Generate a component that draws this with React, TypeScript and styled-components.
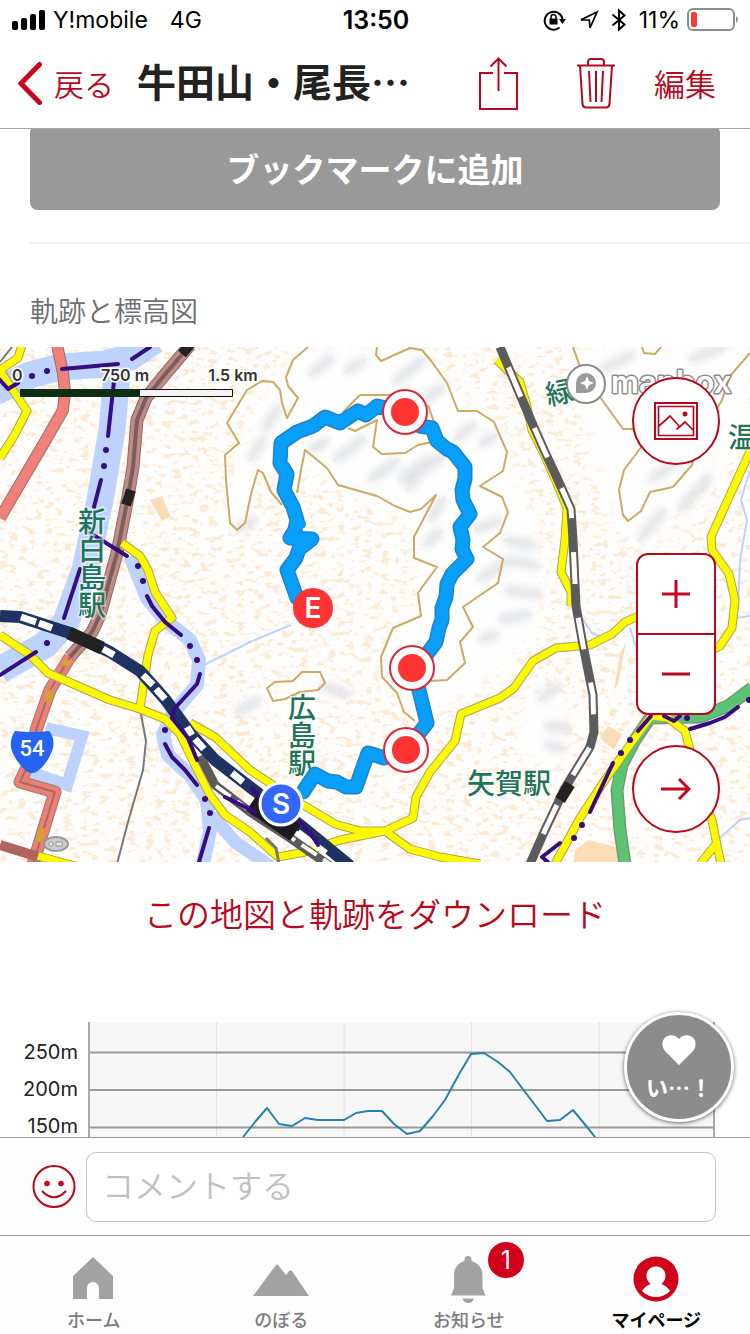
import React from "react";
import styled, { createGlobalStyle } from "styled-components";

const RED = "#b8081e";
const JP = `"Noto Sans CJK JP", sans-serif`;
const LATIN = `Inter, "Noto Sans CJK JP", sans-serif`;

const GlobalStyle = createGlobalStyle`
  * { box-sizing: border-box; }
  body { margin: 0; background: #fff; font-family: ${JP}; color: #222; }
  button, input { font-family: inherit; }
  button { border: 0; padding: 0; background: none; cursor: pointer; }
  a { text-decoration: none; }
  svg { display: block; }
`;

const Screen = styled.div`
  height: 100vh;
  display: flex;
  flex-direction: column;
  overflow: hidden;
`;

/* ---------- status bar ---------- */

const StatusBar = styled.div`
  display: grid;
  grid-template-columns: 1fr auto 1fr;
  align-items: center;
  height: 40px;
  flex: none;
  padding: 0 10px 0 12px;
  font-family: ${LATIN};
  font-size: 23px;
  line-height: 28px;
  color: #000;
`;

const StatusGroup = styled.div<{ $end?: boolean }>`
  display: flex;
  align-items: center;
  gap: ${(p) => (p.$end ? 12 : 7)}px;
  justify-content: ${(p) => (p.$end ? "flex-end" : "flex-start")};
`;

const Network = styled.span`
  margin-left: 15px;
`;

const Clock = styled.strong`
  font-weight: 600;
  font-size: 25px;
`;

const Battery = styled.span`
  display: flex;
  align-items: center;
  gap: 7px;
`;

/* ---------- navigation header ---------- */

const Header = styled.header`
  display: flex;
  align-items: center;
  flex: none;
  height: 89px;
  padding: 0 34px 2px 18px;
  border-bottom: 1px solid #a6a6a6;
`;

const BackButton = styled.button`
  display: flex;
  align-items: center;
  gap: 11px;
  font-size: 30px;
  line-height: 44px;
  font-weight: 350;
  color: ${RED};
`;

const Title = styled.h1`
  flex: 1;
  min-width: 0;
  margin: 0 0 6px 23px;
  font-size: 39px;
  line-height: 56px;
  font-weight: 700;
  white-space: nowrap;
`;

const Actions = styled.div`
  display: flex;
  align-items: center;
  gap: 59px;
`;

const EditButton = styled.button`
  margin-left: -20px;
  font-size: 31px;
  line-height: 44px;
  font-weight: 350;
  color: ${RED};
`;

/* ---------- scrolling content ---------- */

const Content = styled.main`
  position: relative;
  flex: 1;
  min-height: 0;
  overflow: hidden;
`;

const BookmarkButton = styled.button`
  display: block;
  width: calc(100% - 60px);
  height: 85px;
  margin: -4px 30px 0;
  border-radius: 8px;
  background: #999;
  color: #fff;
  font-size: 33px;
  line-height: 48px;
  font-weight: 700;
`;

const Divider = styled.hr`
  margin: 32px 0 0 30px;
  border: 0;
  border-top: 2px solid #f2f2f2;
`;

const SectionTitle = styled.h2`
  margin: 46px 30px 17px;
  font-size: 28px;
  line-height: 40px;
  font-weight: 350;
  color: #6e6e73;
`;

const MapPanel = styled.section`
  position: relative;
  height: 515px;
  overflow: hidden;
`;

const MapDrawing = styled.svg`
  width: 100%;
  height: 100%;
`;

const MapControls = styled.div`
  position: absolute;
  top: 30px;
  right: 30px;
  display: flex;
  flex-direction: column;
  align-items: center;
`;

const RoundButton = styled.button`
  display: grid;
  place-items: center;
  width: 88px;
  height: 88px;
  border: 2px solid ${RED};
  border-radius: 50%;
  background: #fff;
`;

const ZoomGroup = styled.div`
  display: flex;
  flex-direction: column;
  width: 80px;
  margin: 88px 0 30px;
  border: 2px solid ${RED};
  border-radius: 12px;
  background: #fff;
`;

const ZoomButton = styled.button`
  display: grid;
  place-items: center;
  height: 78px;
  & + & {
    height: 80px;
    border-top: 2px solid ${RED};
  }
`;

const DownloadLink = styled.a`
  display: block;
  margin: 26px 0 84px;
  text-align: center;
  font-size: 33px;
  line-height: 50px;
  font-weight: 350;
  color: ${RED};
`;

const Chart = styled.section`
  display: flex;
  padding-right: 35px;
`;

const ChartLabels = styled.div`
  flex: none;
  width: 78px;
  margin-right: 10px;
  padding-top: 12px;
  text-align: right;
  font-family: ${LATIN};
  font-size: 20px;
  line-height: 37px;
  color: #222;
`;

const ChartPlot = styled.svg`
  flex: 1;
  min-width: 0;
  height: 150px;
`;

const LikeButton = styled.button`
  position: absolute;
  right: 16px;
  bottom: 15px;
  display: flex;
  flex-direction: column;
  align-items: center;
  gap: 5px;
  width: 110px;
  height: 110px;
  padding-top: 20px;
  border: 3px solid #fff;
  border-radius: 50%;
  background: #8c8c8c;
  box-shadow: 0 1px 4px rgba(0, 0, 0, 0.6);
  color: #fff;
  font-size: 22px;
  line-height: 32px;
  font-weight: 700;
`;

/* ---------- comment bar and tabs ---------- */

const CommentBar = styled.form`
  display: flex;
  align-items: center;
  flex: none;
  gap: 10px;
  height: 98px;
  padding: 0 34px 0 32px;
  border-top: 1px solid #9a9a9a;
  background: #fdfdfd;
`;

const CommentInput = styled.input`
  flex: 1;
  min-width: 0;
  height: 70px;
  padding: 0 15px 6px;
  border: 1px solid #c4c4c4;
  border-radius: 10px;
  background: #fff;
  font-size: 32px;
  font-weight: 350;
  color: #222;
  outline: none;
  &::placeholder {
    color: #c0c0c0;
    opacity: 1;
  }
`;

const TabBar = styled.nav`
  display: grid;
  grid-template-columns: repeat(4, 1fr);
  flex: none;
  height: 99px;
  border-top: 1px solid #9a9a9a;
  background: #fdfdfd;
`;

const Tab = styled.a<{ $active?: boolean }>`
  display: flex;
  flex-direction: column;
  align-items: center;
  padding-top: 18px;
  font-size: 18px;
  line-height: 28px;
  font-weight: ${(p) => (p.$active ? 700 : 500)};
  color: ${(p) => (p.$active ? "#000" : "#7c7c7c")};
`;

const TabIcon = styled.span`
  position: relative;
  margin-bottom: 1px;
`;

const Badge = styled.span`
  position: absolute;
  top: -12px;
  left: 47px;
  width: 36px;
  height: 36px;
  border-radius: 50%;
  background: #d0021b;
  color: #fff;
  font-family: ${LATIN};
  font-size: 25px;
  line-height: 36px;
  font-weight: 400;
  text-align: center;
`;

/* ---------- map data ---------- */

const yellowRoads = [
  "M22 345 L18 358 L0 370 L10 386 L27 411 L14 436 L0 458",
  "M0 635 L30 655 L48 673 L110 700 L140 709 L165 719 L180 734 L195 765 L210 795 L225 815 L250 832 L278 857 L305 852 L340 840 L385 831",
  "M190 723 L215 737 L250 770 L300 803 L335 824 L360 831 L385 831 L410 849 L440 857 L480 864",
  "M385 831 L413 818 L416 797 L430 772 L455 741 L461 714 L500 698 L514 688 L533 661 L556 648 L590 645 L612 634 L625 622 L645 613",
  "M122 543 L140 556 L148 570 L155 592 L172 618 L155 631 L148 655 L140 708",
  "M497 360 L520 382 L527 407 L532 430 L543 452 L556 481 L567 508 L565 540 L561 572 L571 592 L571 606",
  "M752 447 L730 495 L711 537 L712 550 L729 574 L735 600 L732 628 L720 646 L708 652",
  "M555 864 L580 818 L605 780 L632 742 L651 716 L668 718 L685 731 L690 750 L704 800 L712 820 L718 850 L721 864",
  "M716 844 L700 864",
  "M38 856 L75 866",
];

const contours = [
  "M308 347 L293 360 L286 377 L288 386 L298 398 L287 418 L282 403 L280 390 L273 382 L262 381 L247 390 L227 423 L239 443 L225 455 L226 480 L230 523 L237 530 L245 523 L251 494 L258 470 L263 473 L271 492 L282 505",
  "M297 493 L301 470 L305 450 L327 468 L338 485 L377 496 L395 506 L410 512 L421 509 L436 495 L414 537 L414 558 L437 567 L418 593 L421 616 L393 628 L381 657 L382 677 L397 693 L404 712 L415 721",
  "M377 347 L376 355 L381 361 L410 348 L422 350 L432 362 L447 383 L458 411 L477 411 L494 422 L507 452 L503 471 L480 486 L502 497 L508 512 L500 533 L483 547 L503 559 L498 583 L463 607 L473 627 L460 642 L465 663 L447 680 L430 681",
  "M395 395 L360 395 L343 412",
  "M348 428 L355 431 L377 420 L373 447 L382 454 L405 453 L418 445 L432 442",
  "M428 405 L435 425",
  "M267 688 L275 682 L293 681 L302 672 L320 672 L325 683 L318 690 L300 692 L285 699 L273 701 Z",
  "M573 347 L580 367 L600 397 L623 429 L638 429",
  "M642 347 L644 353 L655 354 L661 347",
  "M642 446 L624 470 L619 490 L623 515 L628 521 L641 511 L650 492 L673 487 L692 465 L696 445 L722 400 L730 376 L750 353",
];

const boundaries = [
  "M62 369 L118 364", "M132 359 L150 347", "M0 380 L8 389 L18 383", "M114 381 L108 436",
  "M101 480 L94 507", "M90 533 L127 556", "M80 569 L64 618", "M36 652 L0 675",
  "M147 596 L152 606 L165 622 L181 635",
  "M200 674 L197 684 L174 709 L172 718 L188 738 L197 760",
  "M165 744 L172 757 L185 770 L197 785", "M209 828 L199 862",
  "M225 797 L255 812", "M252 788 L262 800", "M298 820 L312 836 L318 845",
  "M651 716 L638 731", "M613 763 L590 812", "M560 843 L542 857 L550 864",
  "M664 716 L674 721 L680 716", "M690 729 L710 723 L725 717 L738 707",
];

const boundaryDots = [
  [32, 376], [47, 371], [106, 450], [104, 466], [138, 566], [143, 581], [190, 646], [197, 660],
  [47, 643], [165, 730], [205, 799], [210, 813], [630, 740], [621, 753], [582, 825], [574, 838],
  [687, 718], [749, 700],
];

const track =
  "M303 792 L315 774 L328 781 L337 782 L346 787 L356 787 L368 753 L384 758 L406 750 L427 723 L418 686 L412 668 L427 654 L436 642 L439 628 L442 620 L442 608 L446 597 L447 584 L452 574 L467 559 L462 549 L463 540 L460 527 L470 514 L463 500 L462 490 L465 479 L465 467 L453 452 L447 449 L437 441 L432 428 L420 426 L405 412 L377 406 L366 415 L358 411 L340 423 L325 417 L313 426 L297 432 L281 443 L280 463 L287 474 L284 490 L293 507 L297 520 L295 530 L290 538 L312 539 L299 549 L296 558 L287 570 L297 598";

const hillStrokes =
  "M310 375l22 -18 M345 372l20 -12 M395 382l30 -24 M425 400l18 -14 M310 450l18 -10 M335 460l30 -22 M370 480l28 -20 M400 480l30 -22 M425 470l22 -18 M455 440l20 -16 M480 445l16 -10 M475 530l26 -10 M478 580l26 -16 M480 640l18 -6 M500 620l30 -6 M505 590l36 4 M505 560l34 6 M505 540l30 6 M265 430l14 -24 M250 460l14 -22 M238 530l18 -12 M320 685l30 10 M640 540l24 -30 M680 510l30 -34 M650 480l30 -20 M600 370l34 -16 M690 360l34 -14 M540 700l20 -16 M545 725l26 4 M545 745l20 4 M420 470l-12 20 M430 520l14 -22 M425 545l16 -14 M260 700l-24 12";

const Waypoint = ({ x, y }: { x: number; y: number }) => (
  <g>
    <circle cx={x} cy={y} r="22" fill="#fff" stroke="#d9273a" strokeWidth="2" />
    <circle cx={x} cy={y} r="14" fill="#ff3333" />
  </g>
);

const VerticalLabel = styled.text`
  writing-mode: vertical-rl;
  font-size: 28px;
`;

const rail = "M0 616 L20 617 L70 633 L110 652 L140 671 L165 699 L190 733 L215 760 L250 787 L300 825 L350 866";
const grayRail = "M500 347 L521 397 L533 425 L545 452 L558 480 L571 509 L573 540 L576 606 L583 645 L593 695 L594 732 L590 747 L565 788 L545 830 L530 864";
const brownRail = "M190 345 L162 378 L146 398 L137 420 L133 467 L128 497 L117 553 L100 615 L92 632 L70 657";
const redRoad = "M70 657 L50 690 L37 727 L28 765 L20 782 L55 792 L33 864";

const AreaMap = () => (
  <MapDrawing viewBox="0 347 750 515" preserveAspectRatio="xMidYMid slice" role="img" aria-label="軌跡の地図">
    <defs>
      <filter id="blocks" x="0" y="0" width="100%" height="100%">
        <feTurbulence type="fractalNoise" baseFrequency="0.11 0.19" numOctaves="4" seed="4" />
        <feColorMatrix values="0 0 0 0 0.97  0 0 0 0 0.82  0 0 0 0 0.66  8 0 0 0 -4.4" />
      </filter>
      <filter id="relief" x="-10%" y="-10%" width="120%" height="120%">
        <feGaussianBlur stdDeviation="4" />
      </filter>
      <filter id="soft" x="-10%" y="-10%" width="120%" height="120%">
        <feGaussianBlur stdDeviation="8" />
      </filter>
    </defs>
    <rect y="347" width="750" height="515" fill="#fffefd" />
    <rect y="347" width="750" height="515" filter="url(#blocks)" />
    <g fill="#fefefe" filter="url(#soft)">
      <path d="M255 400 L300 345 L420 345 L460 395 L505 430 L545 560 L540 630 L480 690 L430 710 L385 690 L385 640 L425 600 L405 520 L320 475 L260 470 L240 540 L225 510 Z" />
      <path d="M570 345 H750 V440 L700 480 L650 560 L610 520 Z M240 700 L330 670 L350 690 L270 720 Z M520 690 L570 700 L560 770 L520 760 Z" />
    </g>
    <path d={hillStrokes} stroke="#dfe0e4" strokeWidth="9" fill="none" filter="url(#relief)" />
    <path d={hillStrokes} stroke="#e9eaed" strokeWidth="3" fill="none" strokeLinecap="round" opacity="0.7" />
    <path d="M150 500 l12 -4 l8 20 l-8 5z M614 690 l6 -36 l6 -12 l-8 42z M600 738 l8 -12 l14 8 l-8 16z M575 850 l14 -10 l30 8 v16 h-46z" fill="#fbdcb5" />

    <g fill="none" stroke="#bdd2fd" strokeLinejoin="round">
      <path d="M-5 392 L30 375 L60 367 L105 364 L130 357 L155 340" strokeWidth="27" />
      <path d="M118 362 L112 430 L100 500 L85 570 L66 622 L45 645 L0 670" strokeWidth="27" />
      <path d="M130 556 L147 598 L165 620 L190 640 L199 660 L197 685 L173 713 L163 735 L168 755 L190 775 L207 800 L210 830 L203 864" strokeWidth="14" />
      <path d="M212 815 L235 842 L270 866" strokeWidth="13" />
      <path d="M46 728 L82 736 L67 785 L30 772" strokeWidth="12" strokeLinejoin="miter" />
      <path d="M206 664 L250 642 L291 625 M750 470 L741 500 L747 520 L740 560 L738 610 M582 618 L592 633 L608 640 M630 628 L637 650 M720 838 L740 820 L750 818 M735 618 L750 616" strokeWidth="2" />
    </g>

    <g fill="none" stroke="#cbaa64" strokeWidth="2" strokeLinejoin="round">
      {contours.map((d) => <path key={d} d={d} />)}
    </g>

    <g fill="none" strokeLinejoin="round">
      <path d="M140 709 L146 741 L143 770 L128 822 L117 864 M12 347 L0 362" stroke="#777" strokeWidth="2" />
      <path d="M57 345 L63 373 L65 392 L63 410 L47 438 L0 518" stroke="#8c7470" strokeWidth="12" />
      <path d="M57 345 L63 373 L65 392 L63 410 L47 438 L0 518" stroke="#f08079" strokeWidth="10" />
      <path d="M650 718 L635 740 L622 765 L617 790 L620 830 L625 864 M752 688 L728 706 L700 717 L650 718" stroke="#6f9a78" strokeWidth="13" />
      <path d="M650 718 L635 740 L622 765 L617 790 L620 830 L625 864 M752 688 L728 706 L700 717 L650 718" stroke="#5bc473" strokeWidth="10" />
      <path d={redRoad} stroke="#9a7b72" strokeWidth="13" />
      <path d={redRoad} stroke="#ee7f76" strokeWidth="11" />
      <path d={redRoad} stroke="#a86a64" strokeWidth="2" />
      <path d={brownRail} stroke="#8b6b68" strokeWidth="13" />
      <path d={brownRail} stroke="#c58a86" strokeWidth="11" />
      <path d={brownRail} stroke="#77605d" strokeWidth="4" />
      <path d="M0 845 L42 858" stroke="#b0645f" strokeWidth="10" />
      <path d="M193 341 L182 354 M131 490 L126 505" stroke="#222" strokeWidth="10" />
      {yellowRoads.map((d) => <path key={d} d={d} stroke="#a9a55c" strokeWidth="9" />)}
      {yellowRoads.map((d) => <path key={d} d={d} stroke="#fbf800" strokeWidth="7" />)}
      <path d="M68 660 L65 666 M50 690 L48 702 M42 828 L39 842" stroke="#d3a233" strokeWidth="7" />
      <path d={grayRail} stroke="#5c5c5e" strokeWidth="9" />
      <path d={grayRail} stroke="#fff" strokeWidth="5" strokeDasharray="32 34" strokeDashoffset="-22" />
      <path d="M570 784 L560 800" stroke="#222" strokeWidth="11" />
      <path d="M200 756 L215 785 L250 812 L290 838 L330 866" stroke="#5b5b5b" strokeWidth="9" />
      <path d="M216 786 L250 811 L290 837 L330 864" stroke="#fff" strokeWidth="4" strokeDasharray="18 8" />
      <path d={rail} stroke="#1f3261" strokeWidth="12" />
      <path d="M21 617 L36 622 M39 623 L52 628 M103 649 L114 655 M143 675 L153 685 M156 689 L165 699 M187 727 L192 735 M195 739 L204 749 M232 773 L243 782" stroke="#fff" strokeWidth="7" />
      <path d="M69 633 L102 648" stroke="#222" strokeWidth="13" />
      <path d="M252 802 L296 832" stroke="#1b1b1f" strokeWidth="21" />
      <path d="M298 832 L326 853" stroke="#fff" strokeWidth="6" />
      <path d="M266 838 L276 848 L279 864" stroke="#777" strokeWidth="3" />
      {boundaries.map((d) => <path key={d} d={d} stroke="#360c80" strokeWidth="4" strokeLinecap="round" />)}
    </g>
    {boundaryDots.map(([x, y]) => <circle key={`${x}-${y}`} cx={x} cy={y} r="3" fill="#360c80" />)}

    <path d="M15 731 Q32 733 49 731 Q55 738 53 748 Q49 761 40 769 Q32 777 24 769 Q14 759 11 748 Q10 738 15 731Z" fill="#2563f2" />
    <text x="32" y="756" textAnchor="middle" fontFamily="Roboto, sans-serif" fontSize="22" fontWeight="500" fill="#fff">54</text>
    <ellipse cx="56" cy="844" rx="12" ry="7" fill="#ccc" stroke="#999" strokeWidth="2" />
    <path d="M49 842h4v4h-4z M56 842h6v4h-6z" fill="#e8e8e8" stroke="#999" />

    <g fontFamily={JP} fontSize="28" fontWeight="500" fill="#1f7459" stroke="#fff" strokeWidth="3" paintOrder="stroke" strokeOpacity="0.6">
      <VerticalLabel x="92" y="507">新白島駅</VerticalLabel>
      <VerticalLabel x="302" y="693">広島駅</VerticalLabel>
      <text x="467" y="794">矢賀駅</text>
      <text x="545" y="403" transform="rotate(-12 558 390)">緑</text>
      <text x="728" y="448">温</text>
    </g>

    <path d={track} fill="none" stroke="#1c83c6" strokeWidth="15" strokeLinejoin="round" strokeLinecap="round" />
    <path d={track} fill="none" stroke="#079ffa" strokeWidth="12" strokeLinejoin="round" strokeLinecap="round" />
    <circle cx="301" cy="524" r="5" fill="#079ffa" />
    <Waypoint x={405} y={412} />
    <Waypoint x={412} y={668} />
    <Waypoint x={406} y={750} />
    <g fontFamily={LATIN} fontWeight="600" fill="#fff" textAnchor="middle">
      <circle cx="313" cy="608" r="20" fill="#ff3333" />
      <text x="313" y="618" fontSize="28">E</text>
      <circle cx="281" cy="804" r="21" fill="#3466fb" stroke="#fff" strokeWidth="3" />
      <text x="281" y="814" fontSize="28">S</text>
    </g>

    <g fontFamily={LATIN} fontSize="16" fontWeight="600" fill="#333" stroke="#fff" strokeWidth="3" paintOrder="stroke">
      <text x="12" y="381">0</text>
      <text x="125" y="381" textAnchor="middle">750 m</text>
      <text x="233" y="381" textAnchor="middle">1.5 km</text>
    </g>
    <path d="M20.5 389.500h212v7h-212z" fill="#f4f4f4" stroke="#111" />
    <path d="M20 389h120v8h-120z" fill="#0c2e12" />

    <circle cx="586" cy="384" r="19" fill="#fff" stroke="#8a8a8a" strokeWidth="2" />
    <path d="M576 393 V383 A10 10 0 1 1 586 393 Z" fill="#9a9a9a" />
    <path d="M587 376 L589 381 L594 383 L589 385 L587 390 L585 385 L580 383 L585 381 Z" fill="#fff" />
    <text x="611" y="393" fontFamily={LATIN} fontSize="31" fontWeight="600" fill="#fff" stroke="#8d8d8d" strokeWidth="3" strokeLinejoin="round" paintOrder="stroke">mapbox</text>
  </MapDrawing>
);

const elevation =
  "155,115 167,100 179,86 191,102 204,104 217,96 230,98 245,98 256,98 268,91 280,89 294,89 306,102 319,112 332,109 345,94 357,78 370,54 383,32 396,31 410,40 422,50 434,66 447,83 459,99 472,98 485,88 499,105 507,115 530,145";

export default function App() {
  return (
    <Screen>
      <GlobalStyle />
      <StatusBar>
        <StatusGroup>
          <svg width="34" height="20" viewBox="0 0 34 20">
            <rect x="0" y="11" width="6" height="9" rx="2" />
            <rect x="9" y="8" width="6" height="12" rx="2" />
            <rect x="18" y="4" width="6" height="16" rx="2" />
            <rect x="27" y="0" width="6" height="20" rx="2" />
          </svg>
          <span>Y!mobile</span>
          <Network>4G</Network>
        </StatusGroup>
        <Clock>13:50</Clock>
        <StatusGroup $end>
          <svg width="24" height="22" viewBox="0 0 24 22" fill="none" stroke="#000" strokeWidth="2">
            <path d="M16.500 18.600 A9 9 0 1 1 19.500 10" />
            <path d="M16 10 h7 l-3.500 5z" fill="#000" stroke="none" />
            <path d="M6.500 9.500h8v6h-8z" fill="#000" stroke="none" />
            <path d="M8 10V8a2.500 2.500 0 0 1 5 0v2" strokeWidth="1.500" />
          </svg>
          <svg width="20" height="20" viewBox="0 0 20 20" fill="none" stroke="#000" strokeWidth="1.700" strokeLinejoin="miter">
            <path d="M2 9.800 L18 2 L11 18 L10.300 10 Z" />
          </svg>
          <svg width="16" height="24" viewBox="0 0 16 24" fill="none" stroke="#000" strokeWidth="2">
            <path d="M1.500 6.500 L13.500 16.500 L8 21.500 V2.500 L13.500 7.500 L1.500 17.500" />
          </svg>
          <Battery>
            11%
            <svg width="53" height="24" viewBox="0 0 53 24">
              <rect x="1" y="1" width="46" height="21" rx="5" fill="#fff" stroke="#8c8c8c" strokeWidth="2" />
              <rect x="4" y="4" width="6" height="15" rx="2" fill="#fb3c32" />
              <path d="M49 8 q4 3.500 0 7z" fill="#8c8c8c" />
            </svg>
          </Battery>
        </StatusGroup>
      </StatusBar>

      <Header>
        <BackButton type="button">
          <svg width="25" height="44" viewBox="0 0 25 44" fill="none" stroke="#c8061f" strokeWidth="5" strokeLinecap="round">
            <path d="M21.500 3.500 L3 22.500 L21.500 41.500" />
          </svg>
          戻る
        </BackButton>
        <Title>牛田山・尾長…</Title>
        <Actions>
          <button type="button" aria-label="共有">
            <svg width="40" height="54" viewBox="0 0 40 54" fill="none" stroke={RED} strokeWidth="2">
              <path d="M15 17 H2 V53 H39 V17 H26 M20.500 35 V3 M12.500 10.500 L20.500 2.500 L28.500 10.500" />
            </svg>
          </button>
          <button type="button" aria-label="削除">
            <svg width="38" height="52" viewBox="0 0 38 52" fill="none" stroke={RED} strokeWidth="2">
              <path d="M0 8.500 H38 M11 8 V5 Q11 2 14 2 H24 Q27 2 27 5 V8 M3 9 L5.500 47 Q6 50.500 9 50.500 H29 Q32 50.500 32.500 47 L35 9 M12 14 L13.500 45 M19 14 V45 M26 14 L24.500 45" />
            </svg>
          </button>
          <EditButton type="button">編集</EditButton>
        </Actions>
      </Header>

      <Content>
        <BookmarkButton type="button">ブックマークに追加</BookmarkButton>
        <Divider />
        <SectionTitle>軌跡と標高図</SectionTitle>
        <MapPanel>
          <AreaMap />
          <MapControls>
            <RoundButton type="button" aria-label="写真">
              <svg width="44" height="38" viewBox="0 0 44 38" fill="none" stroke={RED} strokeWidth="2">
                <path d="M1 1h42v36H1z" />
                <path d="M4.500 4.500h35v29h-35z M5 24 L16 14 L25 24 M22.500 27.500 L31 20 L39 28" strokeWidth="1.700" />
                <circle cx="31" cy="12" r="2.500" fill={RED} stroke="none" />
              </svg>
            </RoundButton>
            <ZoomGroup>
              <ZoomButton type="button" aria-label="拡大">
                <svg width="28" height="28" viewBox="0 0 28 28" stroke="#c8061f" strokeWidth="3">
                  <path d="M0 14H28M14 0V28" />
                </svg>
              </ZoomButton>
              <ZoomButton type="button" aria-label="縮小">
                <svg width="28" height="28" viewBox="0 0 28 28" stroke="#b8081e" strokeWidth="3">
                  <path d="M0 14H28" />
                </svg>
              </ZoomButton>
            </ZoomGroup>
            <RoundButton type="button" aria-label="次へ">
              <svg width="30" height="22" viewBox="0 0 30 22" fill="none" stroke="#c8061f" strokeWidth="3">
                <path d="M0 11H28M18 1L28 11L18 21" />
              </svg>
            </RoundButton>
          </MapControls>
        </MapPanel>
        <DownloadLink href="#download">この地図と軌跡をダウンロード</DownloadLink>
        <Chart>
          <ChartLabels>
            <div>250m</div>
            <div>200m</div>
            <div>150m</div>
          </ChartLabels>
          <ChartPlot viewBox="0 0 627 150" preserveAspectRatio="none" role="img" aria-label="標高図">
            <rect width="627" height="150" fill="#f7f7f7" />
            <path d="M128.500 0V150M256 0V150M383.500 0V150M511 0V150" stroke="#e2e2e2" strokeWidth="1" />
            <path d="M0 30.500H627M0 68H627M0 105.500H627" stroke="#999" strokeWidth="2" />
            <path d="M1 0V150M626 0V150" stroke="#aaa" strokeWidth="2" />
            <polyline points={elevation} fill="none" stroke="#2880ad" strokeWidth="2" strokeLinejoin="round" />
          </ChartPlot>
        </Chart>
        <LikeButton type="button">
          <svg width="34" height="30" viewBox="0 0 34 30" fill="#fff">
            <path d="M17 30 L3 16 C-1 11 0 5 3.500 2.200 C8 -1.200 14 0 17 4 C20 0 26 -1.200 30.500 2.200 C34 5 35 11 31 16 Z" />
          </svg>
          い…！
        </LikeButton>
      </Content>

      <CommentBar onSubmit={(e) => e.preventDefault()}>
        <button type="button" aria-label="スタンプ">
          <svg width="44" height="44" viewBox="0 0 44 44" fill="none" stroke={RED} strokeWidth="2">
            <circle cx="22" cy="21.500" r="20.500" />
            <circle cx="15" cy="18.500" r="2.800" fill="#c8061f" stroke="none" />
            <circle cx="29" cy="18.500" r="2.800" fill="#c8061f" stroke="none" />
            <path d="M10 26 Q22 38.500 34 26" />
          </svg>
        </button>
        <CommentInput type="text" aria-label="コメント" placeholder="コメントする" />
      </CommentBar>

      <TabBar>
        <Tab href="#home">
          <TabIcon>
            <svg width="56" height="50" viewBox="0 0 56 50" fill="#a2a2a2">
              <path d="M27 3 L47 22 V45 H33 V34 A6 6 0 0 0 21 34 V45 H7 V22 Z" />
            </svg>
          </TabIcon>
          ホーム
        </Tab>
        <Tab href="#climb">
          <TabIcon>
            <svg width="56" height="50" viewBox="0 0 56 50" fill="#a2a2a2">
              <path d="M0 42 L23 11 Q24 9.500 25 11 L33 21 L36 17 Q37.500 15.500 39 17 L56 42 Z" />
            </svg>
          </TabIcon>
          のぼる
        </Tab>
        <Tab href="#news">
          <TabIcon>
            <svg width="56" height="50" viewBox="0 0 56 50" fill="#a2a2a2">
              <path d="M23.500 7 V5.500 A3.500 3.500 0 0 1 30.500 5.500 V7 C37 9 41.500 14 41.500 21 V34 L44.500 41.500 H10 L13 34 V21 C13 14 17 9 23.500 7 Z" />
              <path d="M21.500 44.500 H33 Q31.500 49 27.200 49 Q23 49 21.500 44.500 Z" />
            </svg>
            <Badge>1</Badge>
          </TabIcon>
          お知らせ
        </Tab>
        <Tab href="#mypage" $active>
          <TabIcon>
            <svg width="56" height="50" viewBox="0 0 56 50">
              <circle cx="28" cy="25" r="22.500" fill="#d0021b" />
              <path d="M28 12.500 C34 12.500 37.500 17 37.500 21.500 C37.500 25 36 28 33.500 30 C37 31.500 40 33.500 42 37 Q36 43 28 43 Q20 43 14 37 C16 33.500 19 31.500 22.500 30 C20 28 18.500 25 18.500 21.500 C18.500 17 22 12.500 28 12.500 Z" fill="#fff" />
            </svg>
          </TabIcon>
          マイページ
        </Tab>
      </TabBar>
    </Screen>
  );
}
